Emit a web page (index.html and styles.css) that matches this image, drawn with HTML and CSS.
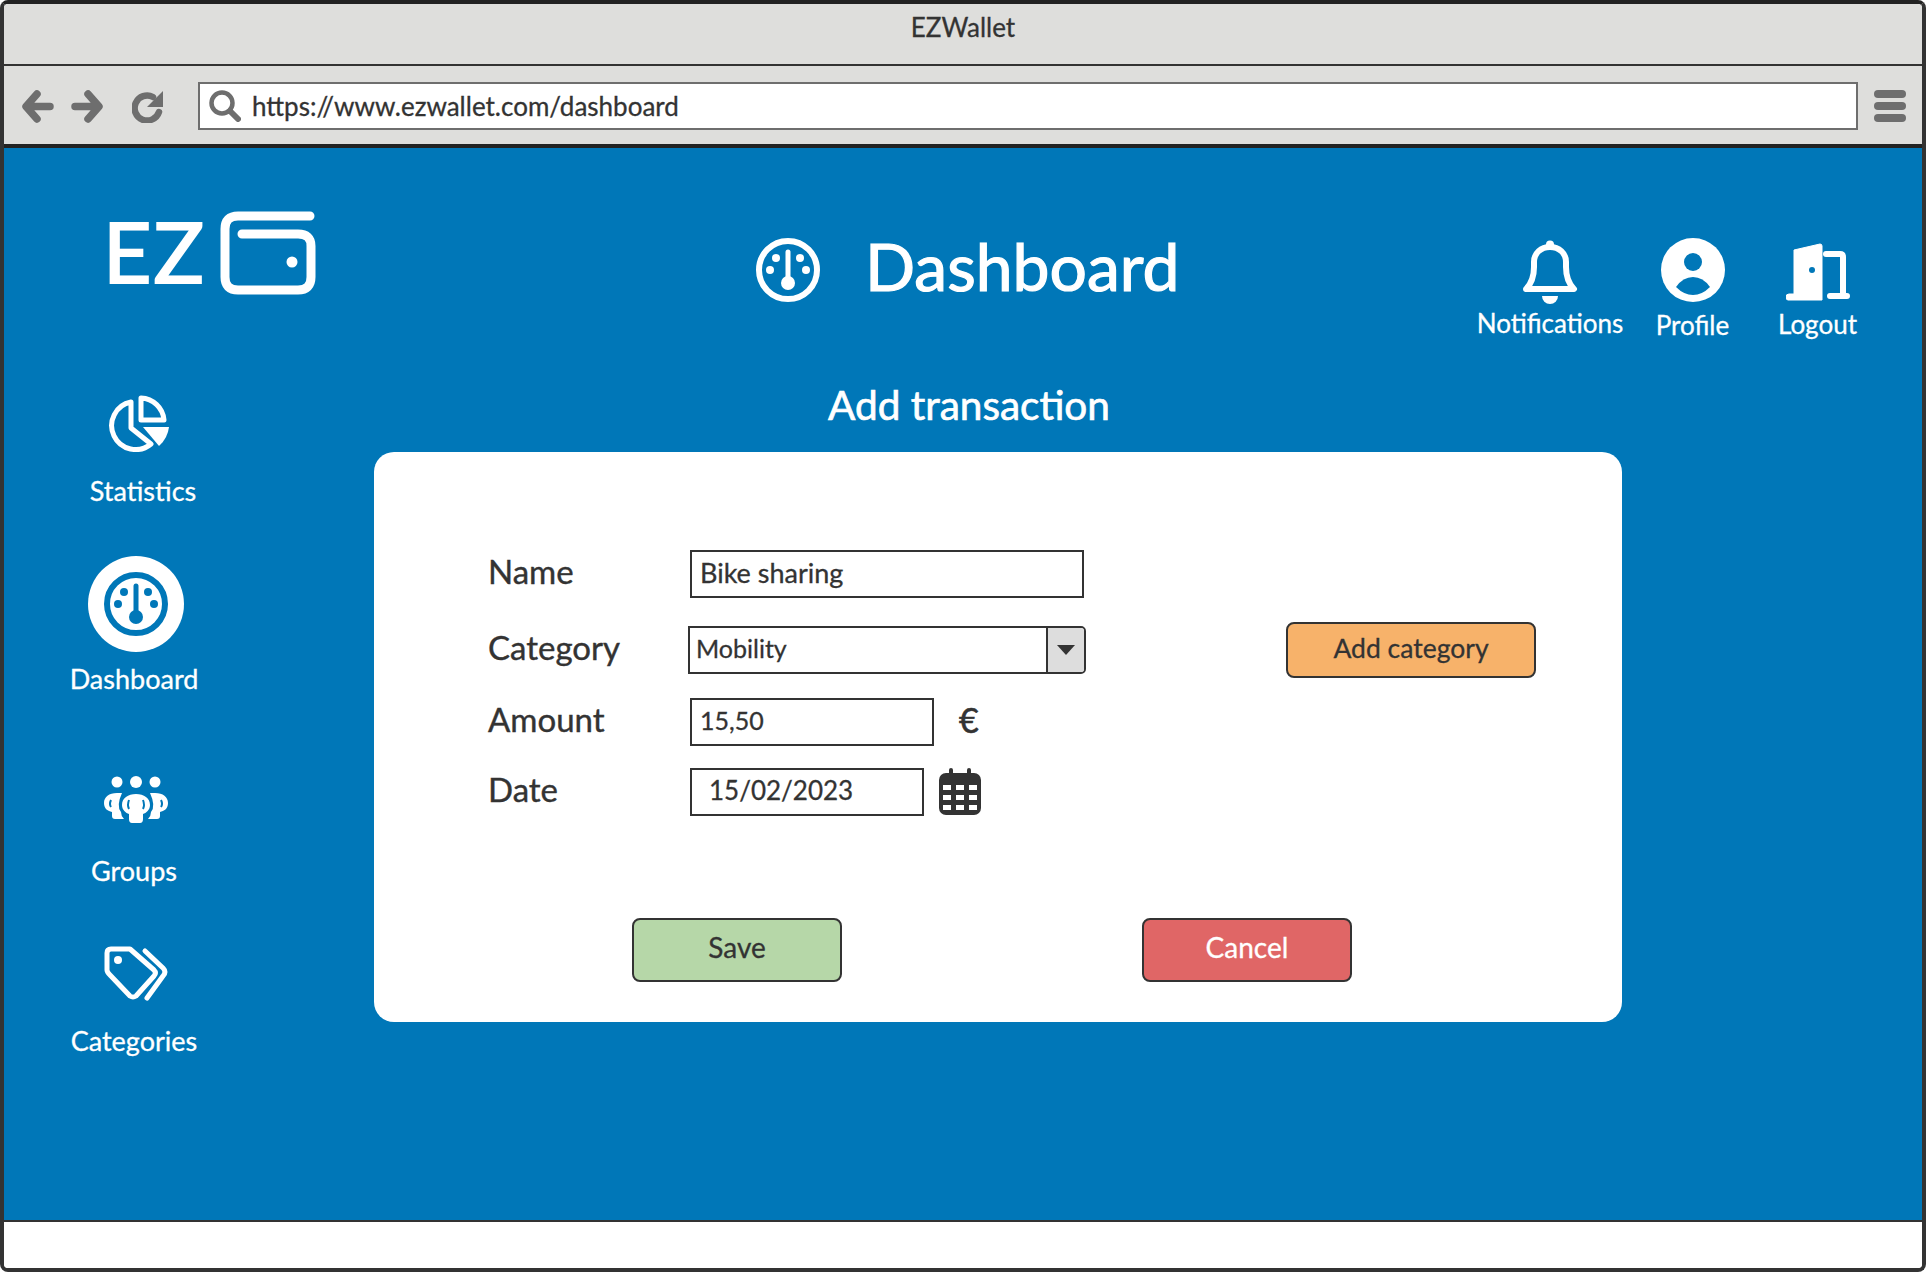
FILE: index.html
```html
<!DOCTYPE html>
<html>
  <head>
    <title>EZWallet</title>
    <link rel="stylesheet" href="styles.css">
  </head>
  <body>
    <div class="window">
      <div class="titlebar">EZWallet</div>

      <div class="navbar">
        <svg class="nav-back" width="32" height="33" viewBox="0 0 32 33"><path d="M15 4 4 16.500 15 29M5 16.500H28" fill="none" stroke="#6e6e6e" stroke-width="7.500" stroke-linecap="round" stroke-linejoin="round"/></svg>
        <svg class="nav-forward" width="32" height="33" viewBox="0 0 32 33"><path d="M17 4 28 16.500 17 29M27 16.500H4" fill="none" stroke="#6e6e6e" stroke-width="7.500" stroke-linecap="round" stroke-linejoin="round"/></svg>
        <svg class="nav-reload" width="32" height="33" viewBox="0 0 32 33"><path d="M27 22A12.500 12.500 0 1 1 21 7" fill="none" stroke="#6e6e6e" stroke-width="6.500" stroke-linecap="round"/><path d="M31 1V17H15Z" fill="#6e6e6e"/></svg>
        <div class="urlbar">
          <svg width="32" height="32" viewBox="0 0 32 32"><circle cx="13" cy="13" r="10.500" fill="none" stroke="#6e6e6e" stroke-width="4.500"/><path d="M21 21 29 29" stroke="#6e6e6e" stroke-width="6" stroke-linecap="round"/></svg>
          <span>https://www.ezwallet.com/dashboard</span>
        </div>
        <div class="burger"><i></i><i></i><i></i></div>
      </div>

      <div class="content">
        <header class="top">
          <div class="logo">
            <span>EZ</span>
            <svg width="96" height="84" viewBox="0 0 96 84"><path d="M90 5H18Q5 5 5 18V66Q5 79 18 79H78Q91 79 91 66V35Q91 23 78 23H22" fill="none" stroke="#fff" stroke-width="9" stroke-linecap="round"/><circle cx="72" cy="51" r="5.500" fill="#fff"/></svg>
          </div>
          <div class="page-title">
            <svg class="gauge" width="64" height="64" viewBox="0 0 64 64"><use href="#gauge"/></svg>
            <h1>Dashboard</h1>
          </div>
          <div class="tools">
            <div class="tool tool-notifications">
              <svg width="56" height="64" viewBox="0 0 56 64"><path d="M4 49Q12 41 12 27V22C12 13 19 7 28 7S44 13 44 22V27Q44 41 52 49Z" fill="none" stroke="#fff" stroke-width="6" stroke-linejoin="round"/><circle cx="28" cy="4.500" r="4" fill="#fff"/><path d="M20 56H36A8 8 0 0 1 20 56Z" fill="#fff"/></svg>
              <span>Notifications</span>
            </div>
            <div class="tool tool-profile">
              <svg width="64" height="64" viewBox="0 0 64 64"><circle cx="32" cy="32" r="32" fill="#fff"/><circle cx="32" cy="24" r="9" fill="#0077b8"/><path d="M15 49Q22 39 32 39T49 49Q41 57 32 57T15 49Z" fill="#0077b8"/></svg>
              <span>Profile</span>
            </div>
            <div class="tool tool-logout">
              <svg width="64" height="64" viewBox="0 0 64 64"><path d="M8 9 34 3Q36 3 36 5V59H2Q0 59 0 56 0 53 3 53H8Z" fill="#fff" stroke="#fff" stroke-width="1" stroke-linejoin="round"/><circle cx="26" cy="29" r="3" fill="#0077b8"/><path d="M40 13H54Q57 13 57 16V55M44 55H61" fill="none" stroke="#fff" stroke-width="6" stroke-linecap="round" stroke-linejoin="round"/></svg>
              <span>Logout</span>
            </div>
          </div>
        </header>

        <div class="body">
          <nav class="sidebar">
            <div class="side-item side-statistics">
              <svg width="61" height="57" viewBox="0 0 61 57"><g fill="none" stroke="#fff" stroke-width="5" stroke-linejoin="round"><path d="M23 7A24 24 0 1 0 43 49L23 33Z"/><path d="M33 3A24 24 0 0 1 56 25H33Z"/></g><path d="M35 32H61A30 30 0 0 1 51 51Z" fill="#fff"/></svg>
              <span>Statistics</span>
            </div>
            <div class="side-item side-dashboard">
              <div class="side-active">
                <svg class="gauge gauge-blue" width="64" height="64" viewBox="0 0 64 64"><use href="#gauge"/></svg>
              </div>
              <span>Dashboard</span>
            </div>
            <div class="side-item side-groups">
              <svg width="64" height="47" viewBox="0 0 64 47"><g fill="#fff"><circle cx="13" cy="6" r="5.500"/><circle cx="32" cy="6" r="6"/><circle cx="51" cy="6" r="5.500"/><path d="M18 17H13C5 17 0 21 0 27S4 35 8 36V40Q8 43 11 43H20Q17 40 17 36 12 30 18 17Z"/><path d="M46 17H51C59 17 64 21 64 27S60 35 56 36V40Q56 43 53 43H44Q47 40 47 36 52 30 46 17Z"/><path d="M32 18C24 18 18 22 18 29 18 34 22 37 25 38V43Q25 47 28 47H36Q39 47 39 43V38C42 37 46 34 46 29 46 22 40 18 32 18Z"/></g><path d="M25 24Q23 29 25 33M39 24Q41 29 39 33M7 24Q5 28 7 31M57 24Q59 28 57 31" fill="none" stroke="#0077b8" stroke-width="2"/></svg>
              <span>Groups</span>
            </div>
            <div class="side-item side-categories">
              <svg width="64" height="58" viewBox="0 0 64 58"><path d="M7 3H26L50 24Q53 27 50 30L32 50Q29 52 26 50L6 29Q3 26 3 24V7Q3 3 7 3Z" fill="none" stroke="#fff" stroke-width="5" stroke-linejoin="round"/><circle cx="14" cy="14" r="4" fill="#fff"/><path d="M41 5 59 22Q63 26 59 30L43 52" fill="none" stroke="#fff" stroke-width="5" stroke-linecap="round" stroke-linejoin="round"/></svg>
              <span>Categories</span>
            </div>
          </nav>

          <main class="main">
            <h2>Add transaction</h2>
            <form class="card">
              <div class="row row-name">
                <label>Name</label>
                <div class="field field-name">Bike sharing</div>
              </div>
              <div class="row row-category">
                <label>Category</label>
                <div class="select">
                  <span>Mobility</span>
                  <div class="select-arrow"><svg width="18" height="10" viewBox="0 0 18 10"><path d="M0 0H18L9 10Z" fill="#333"/></svg></div>
                </div>
                <button type="button" class="btn btn-add">Add category</button>
              </div>
              <div class="row row-amount">
                <label>Amount</label>
                <div class="field field-amount">15,50</div>
                <span class="euro">€</span>
              </div>
              <div class="row row-date">
                <label>Date</label>
                <div class="field field-date">15/02/2023</div>
                <svg class="calendar" width="42" height="48" viewBox="0 0 42 48">
                  <rect y="5" width="42" height="42" rx="7" fill="#333"/>
                  <path d="M12 2V8M30 2V8" stroke="#333" stroke-width="4" stroke-linecap="round"/>
                  <path d="M4 17h8v5H4zM17 17h8v5h-8zM30 17h8v5h-8zM4 27h8v5H4zM17 27h8v5h-8zM30 27h8v5h-8zM4 37h8v5H4zM17 37h8v5h-8zM30 37h8v5h-8z" fill="#fff"/>
                </svg>
              </div>
              <div class="actions">
                <button type="button" class="btn btn-save">Save</button>
                <button type="button" class="btn btn-cancel">Cancel</button>
              </div>
            </form>
          </main>
        </div>
      </div>

      <div class="statusbar"></div>
    </div>

    <svg class="defs" width="0" height="0">
      <symbol id="gauge" viewBox="0 0 64 64">
        <circle cx="32" cy="32" r="29" fill="none" stroke="currentColor" stroke-width="6"/>
        <circle cx="20" cy="20" r="4" fill="currentColor"/>
        <circle cx="44" cy="20" r="4" fill="currentColor"/>
        <circle cx="14" cy="32" r="4" fill="currentColor"/>
        <circle cx="50" cy="32" r="4" fill="currentColor"/>
        <path d="M32 14V44" stroke="currentColor" stroke-width="5" stroke-linecap="round"/>
        <circle cx="32" cy="45" r="7" fill="currentColor"/>
      </symbol>
    </svg>
  </body>
</html>
```

FILE: styles.css
```css
* {
  box-sizing: border-box;
}

body {
  margin: 0;
  font-family: Lato, "Noto Sans", sans-serif;
  color: #333;
  background-color: #fff;
  -webkit-text-stroke: 0.3px;
}

.window {
  width: 1926px;
  height: 1272px;
  display: flex;
  flex-direction: column;
  border: 4px solid #333;
  border-top-color: #222;
  border-radius: 8px;
  overflow: hidden;
}

.titlebar {
  height: 62px;
  flex: none;
  display: flex;
  align-items: center;
  justify-content: center;
  padding-bottom: 14px;
  background-color: #dededc;
  border-bottom: 2px solid #333;
  font-size: 26px;
}

.navbar {
  height: 82px;
  flex: none;
  display: flex;
  align-items: center;
  padding: 2px 16px 0 18px;
  background-color: #dededc;
  border-bottom: 4px solid #222;
}

.nav-back {
  margin-right: 17px;
}

.nav-forward {
  margin-right: 29px;
}

.nav-reload {
  margin-right: 34px;
}

.urlbar {
  width: 1660px;
  height: 48px;
  display: flex;
  align-items: center;
  gap: 11px;
  padding-left: 9px;
  background-color: #fff;
  border: 2px solid #6e6e6e;
  font-size: 26px;
}

.burger {
  display: flex;
  flex-direction: column;
  gap: 4px;
  margin-left: 16px;
}

.burger i {
  width: 32px;
  height: 8px;
  border-radius: 4px;
  background-color: #6e6e6e;
}

.content {
  flex: 1;
  background-color: #0077b8;
  color: #fff;
}

.top {
  height: 188px;
  display: flex;
  align-items: flex-start;
  padding: 63px 42px 0 104px;
}

.logo {
  width: 212px;
  display: flex;
  align-items: flex-start;
  justify-content: space-between;
  padding-right: 4px;
}

.logo span {
  font-size: 84px;
  line-height: 84px;
  letter-spacing: 2px;
  margin: -2px 0 0 -5px;
  -webkit-text-stroke: 2px;
}

.page-title {
  display: flex;
  align-items: center;
  gap: 45px;
  margin: 27px 0 0 436px;
}

.page-title h1 {
  margin: 0;
  padding-bottom: 8px;
  font-size: 66px;
  font-weight: 400;
  line-height: 56px;
  -webkit-text-stroke: 1.2px;
}

.gauge {
  color: #fff;
}

.gauge-blue {
  color: #0077b8;
}

.defs {
  position: absolute;
}

.tools {
  display: flex;
  margin: 29px 0 0 auto;
}

.tool {
  display: flex;
  flex-direction: column;
  align-items: center;
  gap: 4px;
  font-size: 26px;
  line-height: 30px;
}

.tool-notifications {
  width: 160px;
}

.tool-profile {
  width: 125px;
  gap: 8px;
}

.tool-profile svg {
  margin-top: -2px;
}

.tool-logout {
  width: 125px;
  gap: 4px;
}

.tool-logout svg {
  margin-top: 1px;
}

.body {
  display: flex;
  align-items: flex-start;
}

.sidebar {
  width: 260px;
  flex: none;
  padding-top: 59px;
}

.side-item {
  display: flex;
  flex-direction: column;
  align-items: center;
  font-size: 27px;
  line-height: 30px;
}

.side-statistics {
  gap: 24px;
  padding-left: 18px;
}

.side-statistics svg {
  margin-right: 10px;
}

.side-dashboard {
  gap: 12px;
  margin-top: 50px;
}

.side-groups {
  gap: 33px;
  margin-top: 82px;
}

.side-categories {
  gap: 22px;
  margin-top: 60px;
}

.side-active,
.side-groups svg,
.side-categories svg {
  margin-left: 4px;
}

.side-active {
  width: 96px;
  height: 96px;
  display: flex;
  align-items: center;
  justify-content: center;
  border-radius: 50%;
  background-color: #fff;
}

.main {
  margin-left: 110px;
  flex: none;
  width: 1248px;
}

.main h2 {
  width: 1190px;
  height: 116px;
  margin: 0;
  padding-top: 47px;
  text-align: center;
  font-size: 40.500px;
  font-weight: 400;
  line-height: 44px;
  -webkit-text-stroke: 0.7px;
}

.card {
  height: 570px;
  padding: 98px 86px 0 114px;
  background-color: #fff;
  border-radius: 20px;
  color: #333;
}

.row {
  height: 48px;
  display: flex;
  align-items: center;
}

.row label {
  width: 202px;
  flex: none;
  font-size: 33px;
  padding-bottom: 6px;
  -webkit-text-stroke: 0.4px;
}

.row-category {
  margin-top: 28px;
}

.row-amount {
  margin-top: 24px;
}

.row-date {
  margin-top: 22px;
}

.field {
  height: 48px;
  display: flex;
  align-items: center;
  padding: 0 0 4px 8px;
  border: 2px solid #333;
  font-size: 27px;
}

.field-name {
  width: 394px;
}

.field-amount {
  width: 244px;
  font-size: 25px;
}

.field-date {
  width: 234px;
  padding-left: 17px;
  font-size: 26px;
}

.select {
  width: 398px;
  height: 48px;
  display: flex;
  align-items: center;
  justify-content: space-between;
  margin-left: -2px;
  padding-left: 6px;
  border: 2px solid #333;
  border-radius: 0 5px 5px 0;
  font-size: 25px;
}

.select span {
  padding-bottom: 4px;
}

.select-arrow {
  width: 38px;
  height: 44px;
  display: flex;
  align-items: center;
  justify-content: center;
  background-color: #ddd;
  border-left: 2px solid #333;
  border-radius: 0 3px 3px 0;
}

.euro {
  margin-left: 25px;
  font-size: 34px;
  padding-bottom: 5px;
  -webkit-text-stroke: 0.6px;
}

.calendar {
  margin-left: 15px;
}

.btn {
  padding: 0 0 6px;
  border: 2px solid #333;
  border-radius: 8px;
  font-family: inherit;
  font-size: 28px;
  color: #333;
}

.btn-add {
  width: 250px;
  height: 56px;
  flex: none;
  margin-left: auto;
  padding-bottom: 4px;
  background-color: #f7b26a;
  font-size: 26.500px;
}

.actions {
  display: flex;
  gap: 300px;
  margin: 102px 0 0 144px;
}

.btn-save,
.btn-cancel {
  width: 210px;
  height: 64px;
}

.btn-save {
  background-color: #b6d7a8;
}

.btn-cancel {
  background-color: #e06666;
  color: #fff;
}

.statusbar {
  height: 48px;
  flex: none;
  background-color: #fff;
  border-top: 2px solid #333;
}
```
